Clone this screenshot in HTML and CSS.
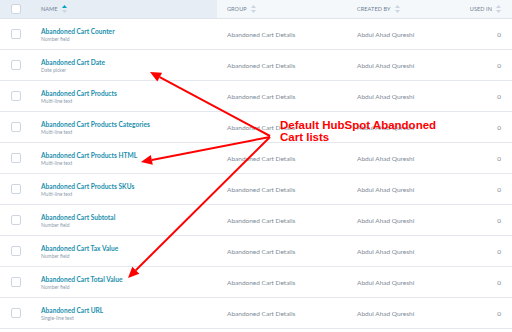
FILE: index.html
```html
<!DOCTYPE html>
<html lang="en">
  <head>
    <meta charset="UTF-8" />
    <title>Abandoned Cart properties</title>
    <link rel="stylesheet" href="styles.css">
  </head>
  <body>
    <div class="page">
      <div class="prop-table">
        <div class="prop-row prop-head">
          <div class="cell cell-check cell-sorted"><span class="checkbox"></span></div>
          <div class="cell cell-sorted">NAME
            <svg class="sort" width="5" height="8" viewBox="0 0 5 8"><path d="M2.5 0 L5 3 L0 3 Z" fill="#00a4bd"/><path d="M2.5 8 L5 5 L0 5 Z" fill="#cbd6e2"/></svg>
          </div>
          <div class="cell">GROUP
            <svg class="sort" width="5" height="8" viewBox="0 0 5 8"><path d="M2.5 0 L5 3 L0 3 Z" fill="#cbd6e2"/><path d="M2.5 8 L5 5 L0 5 Z" fill="#cbd6e2"/></svg>
          </div>
          <div class="cell">CREATED BY
            <svg class="sort" width="5" height="8" viewBox="0 0 5 8"><path d="M2.5 0 L5 3 L0 3 Z" fill="#cbd6e2"/><path d="M2.5 8 L5 5 L0 5 Z" fill="#cbd6e2"/></svg>
          </div>
          <div class="cell cell-num">USED IN
            <svg class="sort" width="5" height="8" viewBox="0 0 5 8"><path d="M2.5 0 L5 3 L0 3 Z" fill="#cbd6e2"/><path d="M2.5 8 L5 5 L0 5 Z" fill="#cbd6e2"/></svg>
          </div>
        </div>

        <div class="prop-row">
          <div class="cell cell-check"><span class="checkbox"></span></div>
          <div class="cell cell-name"><a class="prop-name">Abandoned Cart Counter</a><span class="prop-type">Number field</span></div>
          <div class="cell">Abandoned Cart Details</div>
          <div class="cell">Abdul Ahad Qureshi</div>
          <div class="cell cell-num">0</div>
        </div>
        <div class="prop-row">
          <div class="cell cell-check"><span class="checkbox"></span></div>
          <div class="cell cell-name"><a class="prop-name">Abandoned Cart Date</a><span class="prop-type">Date picker</span></div>
          <div class="cell">Abandoned Cart Details</div>
          <div class="cell">Abdul Ahad Qureshi</div>
          <div class="cell cell-num">0</div>
        </div>
        <div class="prop-row">
          <div class="cell cell-check"><span class="checkbox"></span></div>
          <div class="cell cell-name"><a class="prop-name">Abandoned Cart Products</a><span class="prop-type">Multi-line text</span></div>
          <div class="cell">Abandoned Cart Details</div>
          <div class="cell">Abdul Ahad Qureshi</div>
          <div class="cell cell-num">0</div>
        </div>
        <div class="prop-row">
          <div class="cell cell-check"><span class="checkbox"></span></div>
          <div class="cell cell-name"><a class="prop-name">Abandoned Cart Products Categories</a><span class="prop-type">Multi-line text</span></div>
          <div class="cell">Abandoned Cart Details</div>
          <div class="cell">Abdul Ahad Qureshi</div>
          <div class="cell cell-num">0</div>
        </div>
        <div class="prop-row">
          <div class="cell cell-check"><span class="checkbox"></span></div>
          <div class="cell cell-name"><a class="prop-name">Abandoned Cart Products HTML</a><span class="prop-type">Multi-line text</span></div>
          <div class="cell">Abandoned Cart Details</div>
          <div class="cell">Abdul Ahad Qureshi</div>
          <div class="cell cell-num">0</div>
        </div>
        <div class="prop-row">
          <div class="cell cell-check"><span class="checkbox"></span></div>
          <div class="cell cell-name"><a class="prop-name">Abandoned Cart Products SKUs</a><span class="prop-type">Multi-line text</span></div>
          <div class="cell">Abandoned Cart Details</div>
          <div class="cell">Abdul Ahad Qureshi</div>
          <div class="cell cell-num">0</div>
        </div>
        <div class="prop-row">
          <div class="cell cell-check"><span class="checkbox"></span></div>
          <div class="cell cell-name"><a class="prop-name">Abandoned Cart Subtotal</a><span class="prop-type">Number field</span></div>
          <div class="cell">Abandoned Cart Details</div>
          <div class="cell">Abdul Ahad Qureshi</div>
          <div class="cell cell-num">0</div>
        </div>
        <div class="prop-row">
          <div class="cell cell-check"><span class="checkbox"></span></div>
          <div class="cell cell-name"><a class="prop-name">Abandoned Cart Tax Value</a><span class="prop-type">Number field</span></div>
          <div class="cell">Abandoned Cart Details</div>
          <div class="cell">Abdul Ahad Qureshi</div>
          <div class="cell cell-num">0</div>
        </div>
        <div class="prop-row">
          <div class="cell cell-check"><span class="checkbox"></span></div>
          <div class="cell cell-name"><a class="prop-name">Abandoned Cart Total Value</a><span class="prop-type">Number field</span></div>
          <div class="cell">Abandoned Cart Details</div>
          <div class="cell">Abdul Ahad Qureshi</div>
          <div class="cell cell-num">0</div>
        </div>
        <div class="prop-row">
          <div class="cell cell-check"><span class="checkbox"></span></div>
          <div class="cell cell-name"><a class="prop-name">Abandoned Cart URL</a><span class="prop-type">Single-line text</span></div>
          <div class="cell">Abandoned Cart Details</div>
          <div class="cell">Abdul Ahad Qureshi</div>
          <div class="cell cell-num">0</div>
        </div>
      </div>

      <!-- annotation drawn over the screenshot -->
      <svg class="annotation-arrows" width="512" height="332" viewBox="0 0 512 332">
        <g stroke="#ff0000" stroke-width="2">
          <line x1="270" y1="136" x2="159.7" y2="77.2"/>
          <line x1="270" y1="137" x2="151.8" y2="159.9"/>
          <line x1="270" y1="137" x2="135.8" y2="270.2"/>
        </g>
        <g fill="#ff0000">
          <polygon points="150,72 162.1,72.8 157.3,81.6"/>
          <polygon points="141,162 152.8,164.8 150.8,155"/>
          <polygon points="128,278 139.3,273.8 132.3,266.7"/>
        </g>
      </svg>
      <div class="annotation-text">Default HubSpot Abandoned<br/>Cart lists</div>
    </div>
  </body>
</html>
```

FILE: styles.css
```css
body {
  margin: 0;
  background: #ffffff;
  font-family: Lato, "Liberation Sans", sans-serif;
  -webkit-font-smoothing: antialiased;
}

.page {
  position: relative;
  width: 512px;
  height: 332px;
  overflow: hidden;
}

.prop-row {
  display: grid;
  grid-template-columns: 31px 186px 130px 1fr 60px;
  height: 30px;
  border-bottom: 1px solid #e4e8ee;
  align-items: stretch;
}

.prop-head {
  height: 18px;
  background: #f5f8fa;
  border-bottom: 1px solid #dfe3eb;
  font-size: 5.5px;
  letter-spacing: 0.1px;
  color: #6f8196;
}

.cell {
  display: flex;
  align-items: center;
  padding-left: 10px;
  font-size: 6.5px;
  color: #7d8a98;
  white-space: nowrap;
}

.prop-head .cell {
  font-size: 5.5px;
  color: #6f8196;
}

.cell-sorted {
  background: #e6edf4;
}

.cell-check {
  padding-left: 11px;
}

.cell-num {
  justify-content: flex-end;
  padding-left: 0;
  padding-right: 11px;
}

.sort {
  margin-left: 4px;
}

.checkbox {
  display: block;
  width: 8px;
  height: 8px;
  border: 1px solid #cbd6e2;
  border-radius: 2px;
  background: #ffffff;
}

.cell-name {
  flex-direction: column;
  align-items: flex-start;
  justify-content: center;
  gap: 1px;
}

.prop-name {
  font-size: 6.6px;
  font-weight: 700;
  color: #1b8fad;
}

.prop-type {
  font-size: 5px;
  color: #8e9cad;
}

.annotation-arrows {
  position: absolute;
  top: 0;
  left: 0;
}

.annotation-text {
  position: absolute;
  left: 280px;
  top: 119px;
  font-family: "Liberation Sans", Arial, sans-serif;
  font-weight: 700;
  font-size: 11.5px;
  line-height: 12px;
  color: #ff0000;
}
```
